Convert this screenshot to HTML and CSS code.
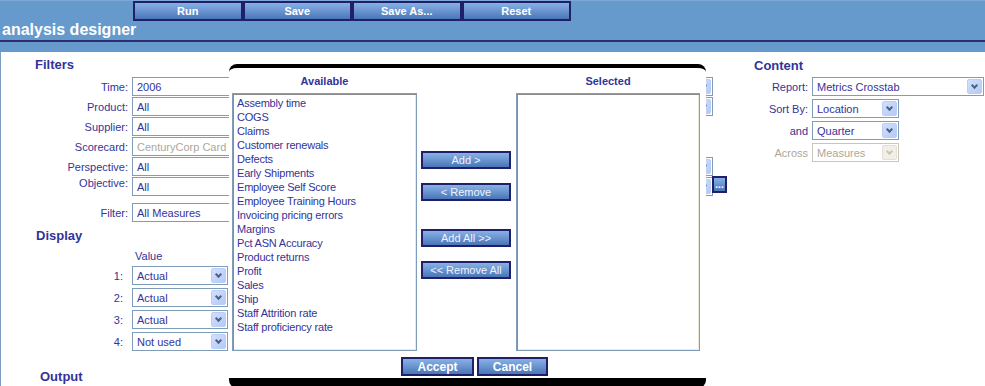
FILE: index.html
```html
<!DOCTYPE html>
<html lang="en">
<head>
  <meta charset="utf-8" />
  <title>analysis designer</title>
  <link rel="stylesheet" href="styles.css">
</head>
<body>
<div class="page">
  <!-- Top bar: actions + title -->
  <header class="topbar">
    <nav class="actions">
      <button class="btn btn-top">Run</button>
      <button class="btn btn-top">Save</button>
      <button class="btn btn-top">Save As...</button>
      <button class="btn btn-top">Reset</button>
    </nav>
    <h1 class="app-title">analysis designer</h1>
  </header>

  <main class="panel">
    <div class="col-main">
      <!-- Filters -->
      <section class="group filters">
        <h2>Filters</h2>
        <div class="form-grid">
          <label>Time:</label>
          <div class="field sel w-long"><span>2006</span><i class="arr"></i></div>
          <label>Product:</label>
          <div class="field sel w-long"><span>All</span><i class="arr"></i></div>
          <label>Supplier:</label>
          <div class="field w-mid"><span>All</span></div>
          <label>Scorecard:</label>
          <div class="field w-mid is-disabled"><span>CenturyCorp Card</span></div>
          <label>Perspective:</label>
          <div class="field sel w-long"><span>All</span><i class="arr"></i></div>
          <label class="top">Objective:</label>
          <div class="field-group">
            <div class="field sel w-long"><span>All</span><i class="arr"></i></div>
            <button class="btn btn-dots">...</button>
          </div>
          <label class="spaced">Filter:</label>
          <div class="field w-mid spaced"><span>All Measures</span></div>
        </div>
      </section>

      <!-- Display -->
      <section class="group display">
        <h2>Display</h2>
        <div class="display-grid">
          <span></span><span class="colhead">Value</span>
          <label>1:</label>
          <div class="field sel w-short"><span>Actual</span><i class="arr"></i></div>
          <label>2:</label>
          <div class="field sel w-short"><span>Actual</span><i class="arr"></i></div>
          <label>3:</label>
          <div class="field sel w-short"><span>Actual</span><i class="arr"></i></div>
          <label>4:</label>
          <div class="field sel w-short"><span>Not used</span><i class="arr"></i></div>
        </div>
      </section>

      <section class="group output">
        <h2>Output</h2>
      </section>
    </div>

    <!-- Content -->
    <aside class="col-side">
      <h2>Content</h2>
      <div class="side-grid">
        <label>Report:</label>
        <div class="field sel w-report"><span>Metrics Crosstab</span><i class="arr"></i></div>
        <label>Sort By:</label>
        <div class="field sel w-sort"><span>Location</span><i class="arr"></i></div>
        <label>and</label>
        <div class="field sel w-sort"><span>Quarter</span><i class="arr"></i></div>
        <label class="muted">Across</label>
        <div class="field sel w-sort is-disabled"><span>Measures</span><i class="arr"></i></div>
      </div>
    </aside>
  </main>

  <!-- Measure picker dialog -->
  <div class="dialog">
    <div class="dlg-grid">
      <div class="dlg-title">Available</div>
      <div></div>
      <div class="dlg-title">Selected</div>

      <ul class="listbox">
        <li>Assembly time</li>
        <li>COGS</li>
        <li>Claims</li>
        <li>Customer renewals</li>
        <li>Defects</li>
        <li>Early Shipments</li>
        <li>Employee Self Score</li>
        <li>Employee Training Hours</li>
        <li>Invoicing pricing errors</li>
        <li>Margins</li>
        <li>Pct ASN Accuracy</li>
        <li>Product returns</li>
        <li>Profit</li>
        <li>Sales</li>
        <li>Ship</li>
        <li>Staff Attrition rate</li>
        <li>Staff proficiency rate</li>
      </ul>

      <div class="move-col">
        <button class="btn btn-move">Add &gt;</button>
        <button class="btn btn-move">&lt; Remove</button>
        <button class="btn btn-move gap-lg">Add All &gt;&gt;</button>
        <button class="btn btn-move">&lt;&lt; Remove All</button>
      </div>

      <ul class="listbox"></ul>
    </div>

    <div class="dlg-actions">
      <button class="btn btn-dlg accept">Accept</button>
      <button class="btn btn-dlg cancel">Cancel</button>
    </div>
  </div>
</div>
</body>
</html>
```

FILE: styles.css
```css
/* ───────── tokens ───────── */
:root{
  --navy:#333399;
  --ink-dark:#20206a;
  --bar:#6699cc;
  --field-border:#7f9db9;
  --muted:#aca899;
  --font:"Liberation Sans",Arial,sans-serif;
}

*,*::before,*::after{box-sizing:border-box;margin:0;padding:0;}
html,body{width:985px;height:386px;overflow:hidden;}
body{font:11px/14px var(--font);color:var(--navy);background:#fff;}
ul{list-style:none;}
.page{position:relative;height:100%;}

/* ───────── buttons ───────── */
.btn{
  font:11px/1 var(--font);
  color:#eef3fb;
  border:2px solid var(--ink-dark);
  background:linear-gradient(#88b0e3,#6c97d3 45%,#4b76b6);
  cursor:pointer;
}
.btn-top{width:109.5px;height:20px;font-weight:bold;color:#fff;}
.btn-move{width:90px;height:18px;margin-top:14px;}
.btn-move:first-child{margin-top:0;}
.btn-move.gap-lg{margin-top:28px;}
.btn-dlg{height:19px;font-size:12px;font-weight:bold;color:#fff;}
.accept{width:73px;}
.cancel{width:71px;}
.btn-dots{width:15px;height:17px;margin:-1px 0 0 -1px;font-weight:bold;font-size:10px;line-height:8px;color:#fff;align-self:flex-start;}

/* ───────── top bar ───────── */
.topbar{background:var(--bar);border-top:1px solid #7ea8d8;padding-bottom:10px;}
.actions{display:flex;padding-left:133px;}
.app-title{
  font:bold 16px/18px var(--font);
  color:#fff;
  padding:0 0 1px 2px;
  border-bottom:2px solid #2c2c6e;
}

/* ───────── panel layout ───────── */
.panel{display:flex;border-left:1px solid #7c9cc4;height:334px;}
.col-main{width:739px;flex:none;}
.col-side{flex:1;}

h2{font:bold 13px/16px var(--font);color:var(--navy);}
.filters h2{margin:5px 0 4px;padding-left:34px;}
.display h2{margin:6px 0 5px;padding-left:35px;}
.output h2{margin-top:18px;padding-left:39px;}
.col-side h2{margin:6px 0 3px;padding-left:14px;}

label{white-space:nowrap;}
label.muted{color:var(--muted);}

.form-grid{
  display:grid;
  grid-template-columns:127px auto;
  column-gap:4px;
  row-gap:1px;
  align-items:center;
  justify-items:start;
}
.form-grid > label{justify-self:end;}
.form-grid > label.top{align-self:start;margin-top:-1px;}
.form-grid .spaced{margin-top:6px;}
.field-group{display:flex;}

.display-grid{
  display:grid;
  grid-template-columns:122px 96px;
  column-gap:9px;
  row-gap:3px;
  align-items:center;
}
.display-grid > label{justify-self:end;}
.colhead{padding-left:3px;}

.side-grid{
  display:grid;
  grid-template-columns:68px auto;
  column-gap:4px;
  row-gap:3px;
  align-items:center;
  justify-items:start;
}
.side-grid > label{justify-self:end;}

/* ───────── form fields (XP look) ───────── */
.field{
  display:flex;
  align-items:center;
  height:19px;
  padding-left:4px;
  border:1px solid var(--field-border);
  background:#fff;
  white-space:nowrap;
  overflow:hidden;
}
.field span{flex:1;}
.field.is-disabled{color:var(--muted);}
.sel.is-disabled{border-color:#c9c7ba;}

.arr{
  flex:none;
  display:grid;
  place-items:center;
  width:15px;
  height:15px;
  margin-right:1px;
  border:1px solid #b9cdf5;
  border-radius:2px;
  background:linear-gradient(135deg,#d2e0fd,#b4c9f5);
}
.arr::after{
  content:"";
  width:5px;
  height:5px;
  margin-top:-3px;
  border:solid #4d6185;
  border-width:0 2px 2px 0;
  transform:rotate(45deg);
}
.is-disabled .arr{background:#f1efe6;border-color:#e2e0d6;}
.is-disabled .arr::after{border-color:#c9c7ba;}

.w-long{width:581px;}
.w-mid{width:420px;}
.w-short{width:96px;}
.w-report{width:172px;}
.w-sort{width:87px;}

/* ───────── dialog ───────── */
.dialog{
  position:absolute;
  left:229px;
  top:64px;
  width:477px;
  height:324px;
  padding:6px 6px 0 3px;
  background:#fff;
  border-top:4px solid #000;
  border-bottom:10px solid #000;
  border-radius:8px;
}
.dlg-grid{display:grid;grid-template-columns:185px 99px 184px;}
.dlg-title{font-weight:bold;text-align:center;margin-bottom:5px;}

.listbox{
  height:258px;
  padding:2px 0 0 4px;
  border:1px solid var(--field-border);
  box-shadow:inset 1px 1px #8d8d8d,inset -1px -1px #ece9d8;
}
.listbox li{white-space:nowrap;letter-spacing:-0.2px;}

.move-col{display:flex;flex-direction:column;align-items:flex-start;padding:58px 0 0 4px;}

.dlg-actions{display:flex;justify-content:center;gap:3px;margin-top:6px;padding-left:17px;}
```
